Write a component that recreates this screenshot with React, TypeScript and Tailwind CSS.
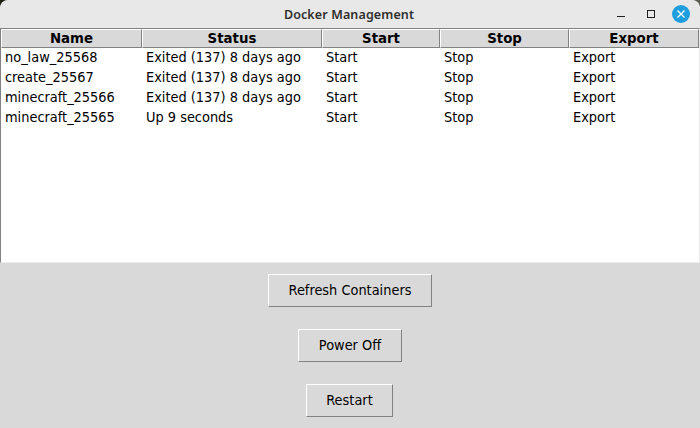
import React from "react";

const columns = [
  { label: "Name", width: "w-[141px]" },
  { label: "Status", width: "w-[180px]" },
  { label: "Start", width: "w-[118px]" },
  { label: "Stop", width: "w-[129px]" },
  { label: "Export", width: "w-[130px]" },
];

const rows = [
  ["no_law_25568", "Exited (137) 8 days ago", "Start", "Stop", "Export"],
  ["create_25567", "Exited (137) 8 days ago", "Start", "Stop", "Export"],
  ["minecraft_25566", "Exited (137) 8 days ago", "Start", "Stop", "Export"],
  ["minecraft_25565", "Up 9 seconds", "Start", "Stop", "Export"],
];

function TitleBar() {
  return (
    <header className="flex h-7 shrink-0 items-center rounded-t-[8px] bg-[#e8e8e8]">
      <div className="w-[105px]" />
      <h1 className="flex-1 pt-[2px] pr-[2px] text-center font-['Noto_Sans',sans-serif] text-[12.5px] font-semibold tracking-[0.12px] text-[#303030]">
        Docker Management
      </h1>
      <div className="flex w-[105px] justify-end pr-2">
        <svg width="80" height="28" viewBox="0 0 80 28" fill="none">
          <path d="M5 16.5h8" stroke="#202020" />
          <rect x="35.5" y="10.5" width="7" height="7" stroke="#202020" />
          <circle cx="69" cy="14" r="9" fill="#1f9ede" />
          <path d="M65.5 10.5l7 7m0-7l-7 7" stroke="#fff" strokeWidth="1.3" />
        </svg>
      </div>
    </header>
  );
}

function TkButton({ label, size }: { label: string; size: string }) {
  return (
    <button className={`h-[33px] border border-t-white border-l-white border-r-[#828282] border-b-[#828282] bg-[#d9d9d9] pb-px text-center leading-[30px] ${size}`}>
      {label}
    </button>
  );
}

export default function App() {
  return (
    <div className="bg-linear-to-r from-[#1c1f10] to-[#5b5e50]">
      <div className="flex h-[428px] w-[700px] flex-col overflow-hidden rounded-t-[8px] bg-[#d9d9d9] font-['DejaVu_Sans_Condensed','DejaVu_Sans',sans-serif] text-[14.4px] font-stretch-condensed text-black">
        <TitleBar />
        <main className="h-[235px] shrink-0 border border-t-[#828282] border-l-[#828282] border-r-[#ebebeb] border-b-[#ebebeb] bg-white">
          <div className="flex h-[19px]">
            {columns.map((c) => (
              <div key={c.label} className={`border border-t-white border-l-white border-r-[#828282] border-b-[#828282] bg-[#d9d9d9] text-center font-['DejaVu_Sans',sans-serif] text-[13.33px] leading-[17px] font-bold font-stretch-normal ${c.width}`}>
                {c.label}
              </div>
            ))}
          </div>
          {rows.map((r) => (
            <div key={r[0]} className="flex h-5">
              {r.map((cell, i) => (
                <div key={i} className={`pl-1 leading-[19px] whitespace-nowrap ${columns[i].width}`}>{cell}</div>
              ))}
            </div>
          ))}
        </main>
        <div className="flex flex-col items-center gap-[22px] pt-[11px]">
          <TkButton label="Refresh Containers" size="w-[164px]" />
          <TkButton label="Power Off" size="w-[104px]" />
          <TkButton label="Restart" size="w-[87px] mr-px" />
        </div>
      </div>
    </div>
  );
}
